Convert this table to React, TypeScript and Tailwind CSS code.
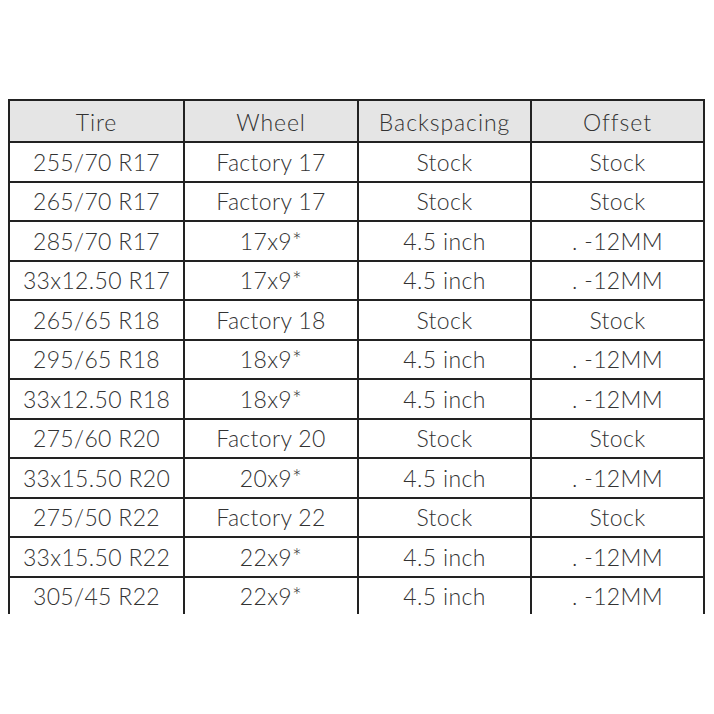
import React from 'react';

const rows: string[][] = [
  ['255/70 R17', 'Factory 17', 'Stock', 'Stock'],
  ['265/70 R17', 'Factory 17', 'Stock', 'Stock'],
  ['285/70 R17', '17x9*', '4.5 inch', '. -12MM'],
  ['33x12.50 R17', '17x9*', '4.5 inch', '. -12MM'],
  ['265/65 R18', 'Factory 18', 'Stock', 'Stock'],
  ['295/65 R18', '18x9*', '4.5 inch', '. -12MM'],
  ['33x12.50 R18', '18x9*', '4.5 inch', '. -12MM'],
  ['275/60 R20', 'Factory 20', 'Stock', 'Stock'],
  ['33x15.50 R20', '20x9*', '4.5 inch', '. -12MM'],
  ['275/50 R22', 'Factory 22', 'Stock', 'Stock'],
  ['33x15.50 R22', '22x9*', '4.5 inch', '. -12MM'],
  ['305/45 R22', '22x9*', '4.5 inch', '. -12MM'],
];

const headers = ['Tire', 'Wheel', 'Backspacing', 'Offset'];

const App: React.FC = () => {
  return (
    <div
      className="w-[714px] h-[714px] bg-white pt-[99px] pl-[8px]"
      style={{ fontFamily: 'Lato, "DejaVu Sans", sans-serif' }}
    >
      <div className="w-[697px] h-[515px] overflow-hidden">
        <div className="grid grid-cols-[175px_174px_173px_173px] border-l-2 border-t-2 border-[#222] text-[#333] font-light text-[23px] tracking-[0.015em]">
          {headers.map((h) => (
            <div
              key={h}
              className="h-[42px] bg-[#e5e5e5] border-r-2 border-b-2 border-[#222] flex items-center justify-center pt-[3px] tracking-[0.04em]"
            >
              {h}
            </div>
          ))}
          {rows.map((r, i) =>
            r.map((c, j) => (
              <div
                key={`${i}-${j}`}
                className="h-[39.5px] border-r-2 border-b-2 border-[#222] flex items-center justify-center"
              >
                {c}
              </div>
            ))
          )}
        </div>
      </div>
    </div>
  );
};

export default App;
